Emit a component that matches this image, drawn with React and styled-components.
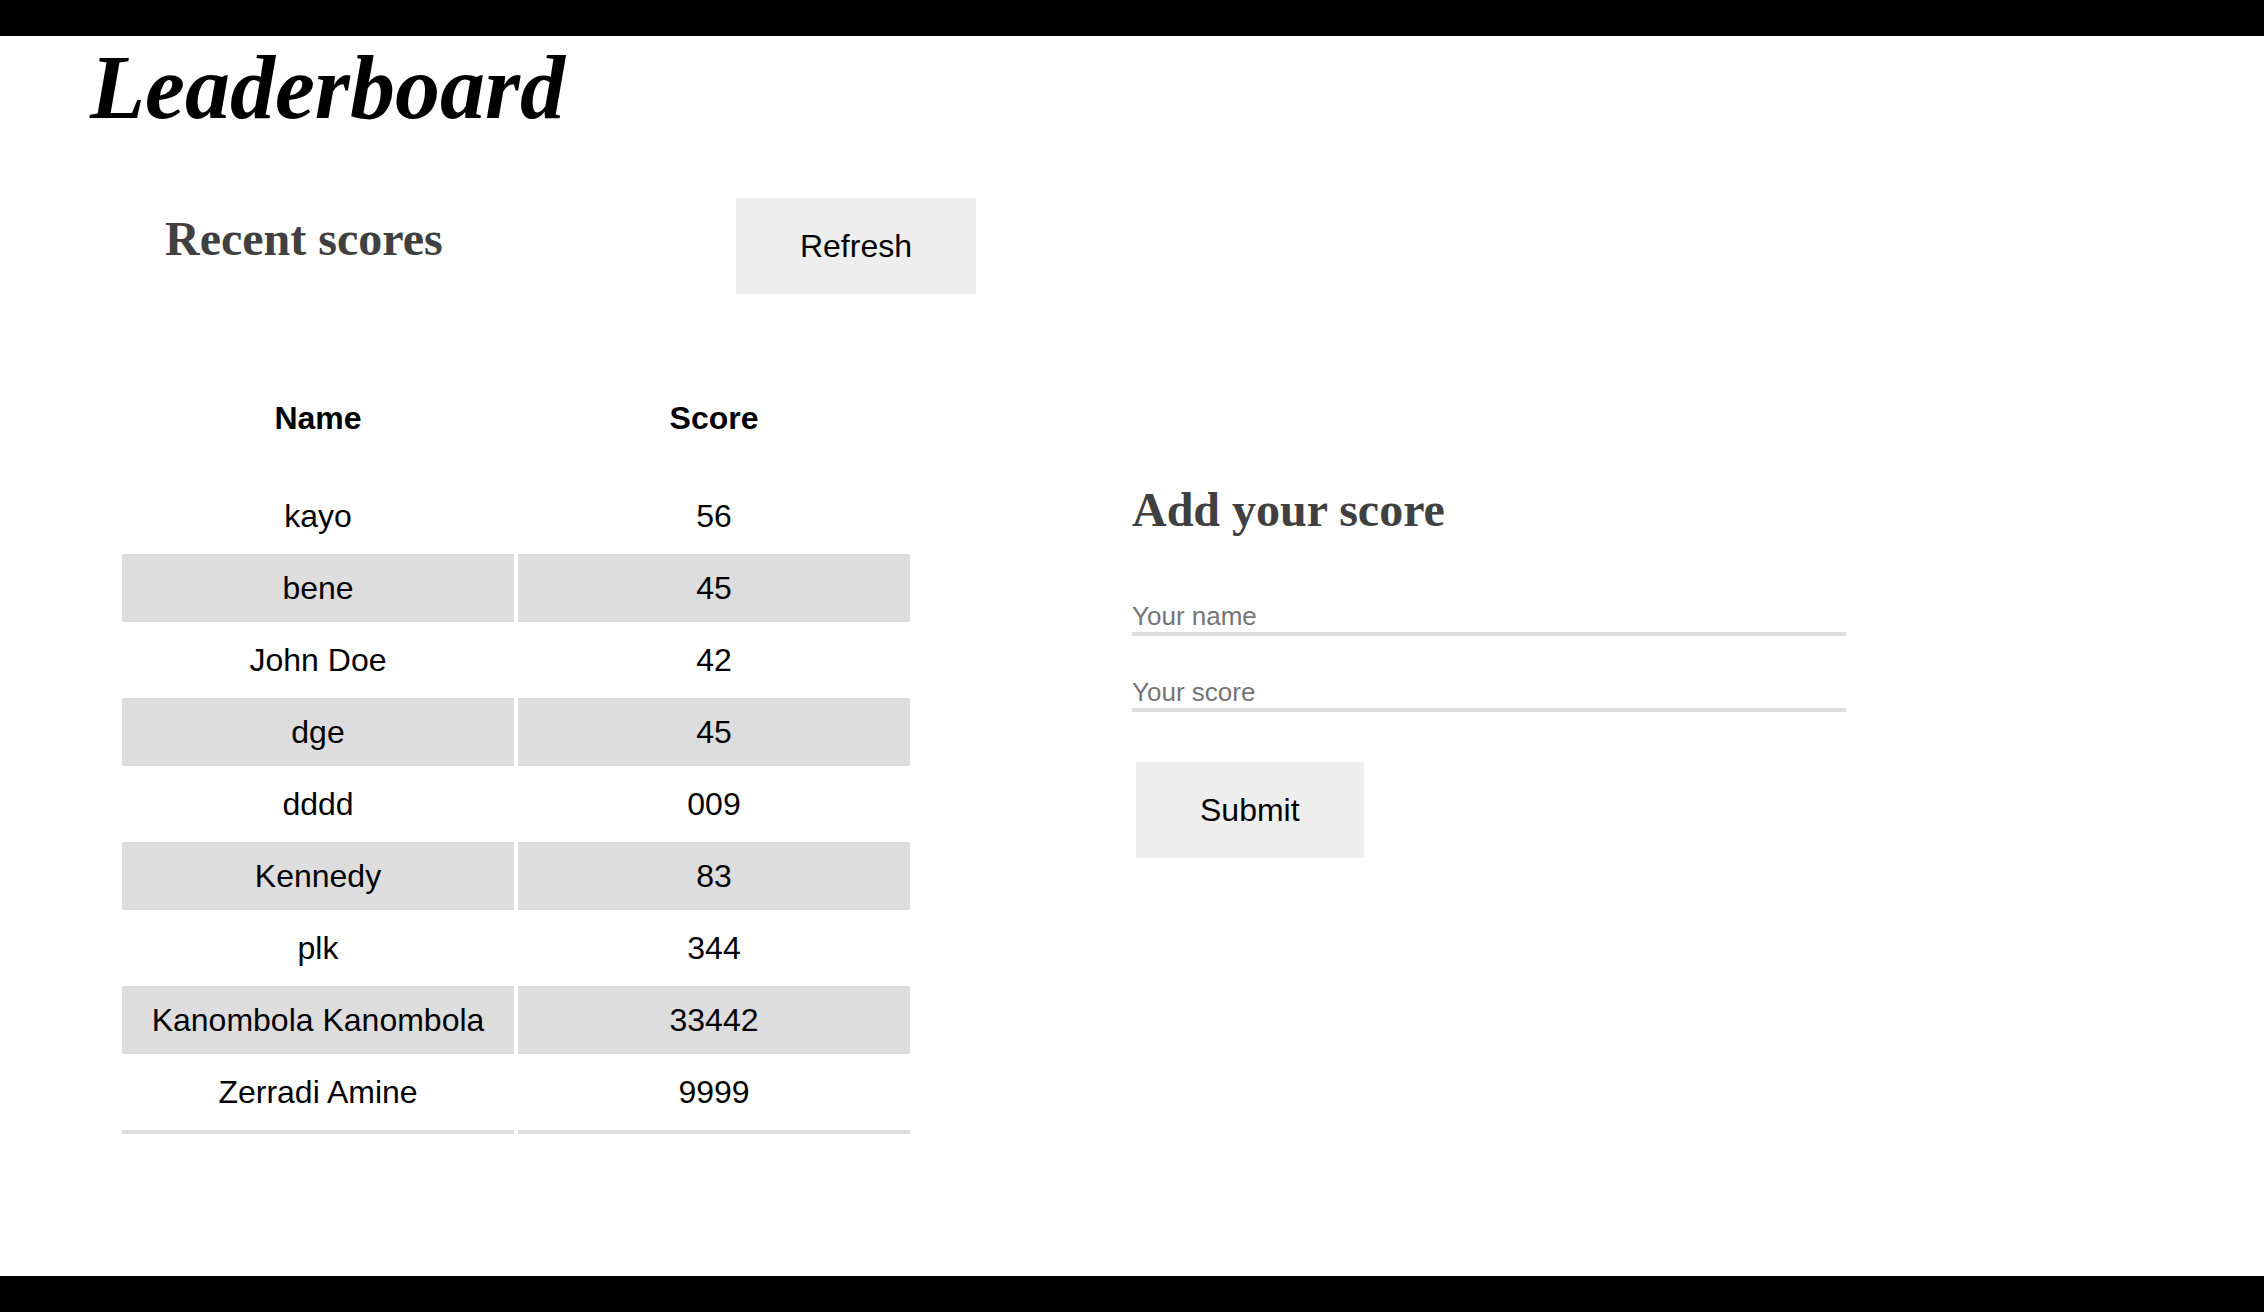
import React from "react";
import styled, { createGlobalStyle } from "styled-components";

const GlobalStyle = createGlobalStyle`
  html, body {
    margin: 0;
    padding: 0;
    background: #fff;
  }
  body {
    font-family: "Liberation Sans", Arial, sans-serif;
    color: #000;
  }
`;

// Layout
const Page = styled.div`
  display: flex;
  flex-direction: column;
  min-height: 100vh;
`;

const Bar = styled.div`
  height: 36px;
  background: #000;
  flex-shrink: 0;
`;

const Main = styled.main`
  flex: 1;
  padding-left: 90px;
`;

const Title = styled.h1`
  margin: 0;
  font-family: "Liberation Serif", "Times New Roman", serif;
  font-style: italic;
  font-weight: 700;
  font-size: 90px;
  line-height: 104px;
  color: #000;
`;

const Columns = styled.div`
  display: flex;
  align-items: flex-start;
  gap: 156px;
  margin-top: 58px;
`;

const LeftColumn = styled.section`
  width: 886px;
`;

const RightColumn = styled.section`
  display: flex;
  flex-direction: column;
  align-items: flex-start;
  margin-top: 284px;
`;

const SectionHeader = styled.div`
  display: flex;
  align-items: flex-start;
`;

const Heading = styled.h2`
  margin: ${(p) => (p.$inset ? "13px 0 0 75px" : "0")};
  width: ${(p) => (p.$inset ? "571px" : "auto")};
  font-family: "Liberation Serif", "Times New Roman", serif;
  font-weight: 700;
  font-size: 48px;
  line-height: 56px;
  color: #404040;
`;

const Button = styled.button`
  height: 96px;
  padding: 0 64px;
  margin: ${(p) => p.$margin || "0"};
  border: none;
  background: #eee;
  font-family: "Liberation Sans", Arial, sans-serif;
  font-size: 32px;
  color: #000;
  cursor: pointer;

  &:hover {
    background: #e4e4e4;
  }
`;

// Table
const Table = styled.table`
  width: 796px;
  margin: 86px 0 0 28px;
  table-layout: fixed;
  border-collapse: separate;
  border-spacing: 4px;
  font-family: "Liberation Sans", Arial, sans-serif;
  font-size: 32px;
`;

const HeadCell = styled.th`
  padding: 0 0 26px;
  line-height: 68px;
  font-weight: 700;
  text-align: center;
`;

const Row = styled.tr`
  background: ${(p) => (p.$striped ? "#ddd" : "transparent")};
`;

const Cell = styled.td`
  padding: 0;
  line-height: 68px;
  text-align: center;
  white-space: nowrap;
  background: inherit;

  ${Row}:last-child & {
    padding-bottom: 4px;
    border-bottom: 4px solid #ddd;
  }
`;

// Form
const Form = styled.form`
  display: flex;
  flex-direction: column;
  align-items: flex-start;
`;

const Input = styled.input`
  box-sizing: border-box;
  width: 714px;
  height: 35px;
  padding: 0;
  margin-top: ${(p) => p.$gap};
  border: none;
  border-bottom: 4px solid #ddd;
  outline: none;
  background: transparent;
  font-family: "Liberation Sans", Arial, sans-serif;
  font-size: 26px;
  color: #000;

  &::placeholder {
    color: #757575;
  }
`;

const scores = [
  { name: "kayo", score: "56" },
  { name: "bene", score: "45" },
  { name: "John Doe", score: "42" },
  { name: "dge", score: "45" },
  { name: "dddd", score: "009" },
  { name: "Kennedy", score: "83" },
  { name: "plk", score: "344" },
  { name: "Kanombola Kanombola", score: "33442" },
  { name: "Zerradi Amine", score: "9999" },
];

const App = () => {
  const handleSubmit = (e) => {
    e.preventDefault();
  };

  return (
    <Page>
      <GlobalStyle />
      <Bar />
      <Main>
        <Title>Leaderboard</Title>
        <Columns>
          <LeftColumn>
            <SectionHeader>
              <Heading $inset>Recent scores</Heading>
              <Button type="button">Refresh</Button>
            </SectionHeader>
            <Table>
              <thead>
                <tr>
                  <HeadCell>Name</HeadCell>
                  <HeadCell>Score</HeadCell>
                </tr>
              </thead>
              <tbody>
                {scores.map((s, i) => (
                  <Row key={i} $striped={i % 2 === 1}>
                    <Cell>{s.name}</Cell>
                    <Cell>{s.score}</Cell>
                  </Row>
                ))}
              </tbody>
            </Table>
          </LeftColumn>
          <RightColumn>
            <Heading>Add your score</Heading>
            <Form onSubmit={handleSubmit}>
              <Input type="text" placeholder="Your name" $gap="63px" />
              <Input type="number" placeholder="Your score" $gap="41px" />
              <Button type="submit" $margin="50px 0 0 4px">
                Submit
              </Button>
            </Form>
          </RightColumn>
        </Columns>
      </Main>
      <Bar />
    </Page>
  );
};

export default App;
